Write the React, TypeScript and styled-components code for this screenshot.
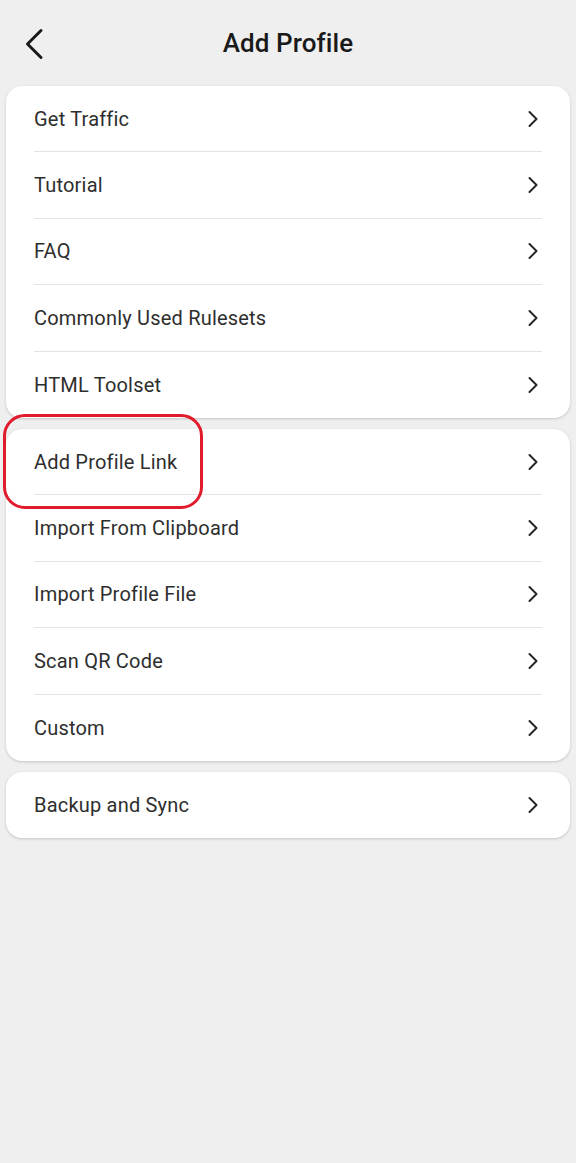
import React from 'react';
import styled, { createGlobalStyle } from 'styled-components';

const GlobalStyle = createGlobalStyle`
  html, body {
    margin: 0;
    padding: 0;
    background: #efefef;
  }
  body {
    font-family: Roboto, "Noto Sans", "Liberation Sans", sans-serif;
    color: #1f1f1f;
  }
`;

const groups: string[][] = [
  ['Get Traffic', 'Tutorial', 'FAQ', 'Commonly Used Rulesets', 'HTML Toolset'],
  ['Add Profile Link', 'Import From Clipboard', 'Import Profile File', 'Scan QR Code', 'Custom'],
  ['Backup and Sync'],
];

function Chevron() {
  return (
    <ChevronIcon viewBox="0 0 12 18" width="12" height="18">
      <path d="M2.5 2 L9.5 9 L2.5 16" fill="none" stroke="#262626" strokeWidth="2" strokeLinecap="round" strokeLinejoin="round" />
    </ChevronIcon>
  );
}

export default function App() {
  return (
    <Page>
      <GlobalStyle />
      <Header>
        <BackButton aria-label="Back">
          <svg viewBox="0 0 20 32" width="20" height="32">
            <path d="M17 2.5 L3.5 16 L17 29.5" fill="none" stroke="#1a1a1a" strokeWidth="3" strokeLinecap="round" strokeLinejoin="round" />
          </svg>
        </BackButton>
        <Title>Add Profile</Title>
      </Header>
      <Groups>
        {groups.map((items, gi) => (
          <Card key={gi}>
            {items.map((label, i) => (
              <Row key={label} $last={i === items.length - 1}>
                <Label>{label}</Label>
                <Chevron />
              </Row>
            ))}
            {gi === 1 && <Highlight />}
          </Card>
        ))}
      </Groups>
    </Page>
  );
}

const Page = styled.div`
  min-height: 1163px;
  background: #efefef;
`;

const Header = styled.header`
  position: relative;
  height: 86px;
  display: flex;
  align-items: center;
  justify-content: center;
  box-sizing: border-box;
`;

const BackButton = styled.button`
  position: absolute;
  left: 24px;
  top: 28px;
  border: 0;
  background: none;
  padding: 0;
  display: flex;
`;

const Title = styled.h1`
  margin: 0;
  font-size: 26px;
  font-weight: 500;
  color: #1a1a1a;
  letter-spacing: 0.1px;
`;

const Groups = styled.div`
  display: flex;
  flex-direction: column;
  gap: 11px;
  padding: 0 6px;
`;

const Card = styled.div`
  position: relative;
  background: #fff;
  border-radius: 16px;
  box-shadow: 0 1px 3px rgba(0, 0, 0, 0.18);
`;

const Row = styled.div<{ $last: boolean }>`
  height: 66.4px;
  margin: 0 28px;
  display: flex;
  align-items: center;
  justify-content: space-between;
  box-sizing: border-box;
  border-bottom: ${(p) => (p.$last ? 'none' : '1px solid #e4e4e4')};
`;

const Label = styled.span`
  font-size: 20px;
  color: #2e2e2e;
  letter-spacing: 0.2px;
`;

const ChevronIcon = styled.svg`
  margin-right: 3px;
`;

const Highlight = styled.div`
  position: absolute;
  left: -3px;
  top: -15px;
  width: 200px;
  height: 95px;
  border: 3px solid #e01b2b;
  border-radius: 22px;
  box-sizing: border-box;
  pointer-events: none;
`;
